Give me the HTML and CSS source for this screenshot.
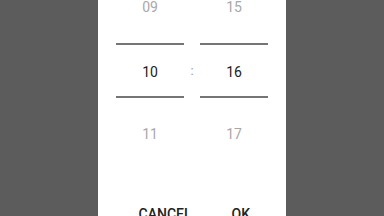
FILE: index.html
```html
<!DOCTYPE html>
<html lang="en">
<head>
  <meta charset="UTF-8">
  <meta name="viewport" content="width=device-width, initial-scale=1.0">
  <title>Set time</title>
  <link rel="stylesheet" href="styles.css">
</head>
<body>

<div class="dialog">

  <!-- Hour / minute spinners -->
  <div class="picker">
    <div class="column">
      <div class="num faded top">09</div>
      <div class="divider"></div>
      <div class="num current">10</div>
      <div class="divider"></div>
      <div class="num faded bottom">11</div>
    </div>

    <div class="colon">:</div>

    <div class="column">
      <div class="num faded top">15</div>
      <div class="divider"></div>
      <div class="num current">16</div>
      <div class="divider"></div>
      <div class="num faded bottom">17</div>
    </div>
  </div>

  <!-- Buttons -->
  <div class="actions">
    <button class="btn">CANCEL</button>
    <button class="btn">OK</button>
  </div>

</div>

</body>
</html>
```

FILE: styles.css
```css
body {
  margin: 0;
  height: 216px;
  display: flex;
  justify-content: center;
  background-color: #5c5c5c; /* dimmed screen behind the dialog */
  font-family: Roboto, "Noto Sans", sans-serif;
  overflow: hidden;
}

.dialog {
  width: 188px;
  height: 216px;
  background-color: #ffffff;
  display: flex;
  flex-direction: column;
  overflow: hidden;
}

.picker {
  display: flex;
  justify-content: center;
}

.column {
  width: 68px;
  display: flex;
  flex-direction: column;
}

.num {
  text-align: center;
  font-size: 14px;
  line-height: 14px;
}

.faded {
  color: #a8a8a8;
}

.top {
  margin-bottom: 29px;
}

.bottom {
  margin-top: 29px;
}

.current {
  color: #202020;
  line-height: 47px;
  padding-top: 4px;
}

.divider {
  height: 2px;
  background-color: #757575;
}

.colon {
  width: 16px;
  text-align: center;
  font-size: 13px;
  color: #9a9a9a;
  padding-top: 64px;
  line-height: 14px;
}

.actions {
  display: flex;
  justify-content: flex-end;
  gap: 8px;
  padding-right: 20px;
  margin-top: 66px;
}

.btn {
  border: none;
  background: none;
  padding: 0 16px;
  font-family: Roboto, "Noto Sans", sans-serif;
  font-size: 14px;
  font-weight: 500;
  line-height: 14px;
  color: #222222;
}
```
